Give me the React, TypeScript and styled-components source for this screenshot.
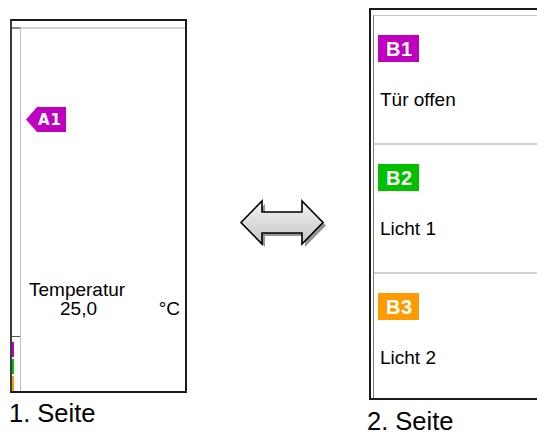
import React from "react";
import styled, { createGlobalStyle } from "styled-components";

const Global = createGlobalStyle`
  html, body { margin: 0; padding: 0; background: #fff; }
  body {
    width: 537px;
    height: 434px;
    overflow: hidden;
    font-family: "Liberation Sans", Arial, sans-serif;
    color: #000;
  }
`;

const Page = styled.div`
  display: flex;
  align-items: flex-start;
  width: 537px;
  height: 434px;
  overflow: hidden;
`;

const Column = styled.div<{ $left: number; $top: number; $width: number }>`
  display: flex;
  flex-direction: column;
  flex: none;
  margin-left: ${(p) => p.$left}px;
  margin-top: ${(p) => p.$top}px;
  width: ${(p) => p.$width}px;
`;

const Caption = styled.div<{ $top: number; $left: number }>`
  margin-top: ${(p) => p.$top}px;
  margin-left: ${(p) => p.$left}px;
  font-size: 25.5px;
  line-height: 1.15;
  white-space: nowrap;
`;

/* ---------- page 1 ---------- */
const ScreenOne = styled.div`
  box-sizing: border-box;
  width: 177px;
  height: 374px;
  border: 2px solid #1a1a1a;
  border-left-color: #3a3a3a;
  display: flex;
  flex-direction: column;
`;

const TopBand = styled.div<{ $h: number }>`
  height: ${(p) => p.$h}px;
  flex: none;
`;

const ScreenBody = styled.div`
  flex: 1;
  display: flex;
`;

const SideStrip = styled.div`
  width: 8px;
  flex: none;
  border-top: 2px solid #8a8a8a;
  border-right: 1px solid #bdbdbd;
  display: flex;
  flex-direction: column;
  justify-content: flex-end;
`;

const SideDivider = styled.div`
  height: 1px;
  background: #555;
  margin-bottom: 5px;
`;

const SideBar = styled.div<{ $color: string }>`
  width: 2px;
  height: 15px;
  background: ${(p) => p.$color};
  & + & {
    margin-top: 2px;
  }
`;

const MainArea = styled.div`
  flex: 1;
  border-top: 2px solid #d4d4d4;
  display: flex;
  flex-direction: column;
`;

const ArrowTag = styled.div<{ $color: string }>`
  margin-top: 78px;
  margin-left: 5px;
  width: 40px;
  height: 25px;
  background: ${(p) => p.$color};
  clip-path: polygon(0 50%, 11px 0, 100% 0, 100% 100%, 11px 100%);
  color: #fff;
  font-family: "DejaVu Sans", sans-serif;
  font-weight: bold;
  font-size: 15px;
  letter-spacing: 1px;
  display: flex;
  align-items: center;
  padding-left: 12px;
  box-sizing: border-box;
`;

const TempBlock = styled.div`
  margin-top: 148px;
  font-size: 19px;
  line-height: 19px;
`;

const TempLabel = styled.div`
  padding-left: 8px;
`;

const TempRow = styled.div`
  display: flex;
  justify-content: space-between;
  padding: 0 5px 0 39px;
`;

/* ---------- arrow ---------- */
const ArrowWrap = styled.svg`
  flex: none;
  margin-left: 51px;
  margin-top: 198px;
`;

/* ---------- page 2 ---------- */
const ScreenTwo = styled.div`
  box-sizing: border-box;
  width: 200px;
  height: 392px;
  border: 2px solid #1a1a1a;
  border-right: none;
  padding-left: 2px;
  display: flex;
  flex-direction: column;
`;

const SectionList = styled.div`
  flex: 1;
  border-top: 1px solid #c8c8c8;
  border-left: 1px solid #7a7a7a;
  display: flex;
  flex-direction: column;
`;

const Section = styled.div<{ $last?: boolean }>`
  display: flex;
  flex-direction: column;
  align-items: flex-start;
  ${(p) =>
    p.$last
      ? "flex: 1;"
      : "height: 127px; flex: none; border-bottom: 2px solid #d2d2d2;"}
`;

const BoxTag = styled.div<{ $color: string }>`
  margin-top: 19px;
  margin-left: 4px;
  width: 41px;
  height: 27px;
  background: ${(p) => p.$color};
  color: #fff;
  font-weight: bold;
  font-size: 20px;
  line-height: 1;
  letter-spacing: 0.5px;
  display: flex;
  align-items: center;
  padding-left: 8px;
  box-sizing: border-box;
`;

const SectionText = styled.div`
  margin-top: 27px;
  margin-left: 6px;
  font-size: 19px;
  line-height: 1.15;
  white-space: nowrap;
`;

const PURPLE = "#c000c0";
const GREEN = "#00c000";
const ORANGE = "#ff9a00";

const sections = [
  { id: "B1", color: PURPLE, text: "Tür offen" },
  { id: "B2", color: GREEN, text: "Licht 1" },
  { id: "B3", color: ORANGE, text: "Licht 2" },
];

const DoubleArrow = () => (
  <ArrowWrap width="92" height="54" viewBox="0 0 92 54">
    <defs>
      <linearGradient id="arrowFill" x1="0" y1="0" x2="0" y2="1">
        <stop offset="0" stopColor="#f4f4f4" />
        <stop offset="1" stopColor="#c4c4c4" />
      </linearGradient>
    </defs>
    <path
      d="M3 24.5 L24 3 L24 14 L64 14 L64 3 L85 24.5 L64 46 L64 35 L24 35 L24 46 Z"
      transform="translate(3 3)"
      fill="#7a7a7a"
      opacity="0.8"
    />
    <path
      d="M3 24.5 L24 3 L24 14 L64 14 L64 3 L85 24.5 L64 46 L64 35 L24 35 L24 46 Z"
      fill="url(#arrowFill)"
      stroke="#000"
      strokeWidth="1.6"
      strokeLinejoin="miter"
    />
  </ArrowWrap>
);

export default function App() {
  return (
    <>
      <Global />
      <Page>
        <Column $left={10} $top={19} $width={177}>
          <ScreenOne>
            <TopBand $h={6} />
            <ScreenBody>
              <SideStrip>
                <SideDivider />
                <SideBar $color={PURPLE} />
                <SideBar $color={GREEN} />
                <SideBar $color={ORANGE} />
              </SideStrip>
              <MainArea>
                <ArrowTag $color={PURPLE}>A1</ArrowTag>
                <TempBlock>
                  <TempLabel>Temperatur</TempLabel>
                  <TempRow>
                    <span>25,0</span>
                    <span>°C</span>
                  </TempRow>
                </TempBlock>
              </MainArea>
            </ScreenBody>
          </ScreenOne>
          <Caption $top={6} $left={-1}>1. Seite</Caption>
        </Column>

        <DoubleArrow />

        <Column $left={39} $top={8} $width={200}>
          <ScreenTwo>
            <TopBand $h={5} />
            <SectionList>
              {sections.map((s, i) => (
                <Section key={s.id} $last={i === sections.length - 1}>
                  <BoxTag $color={s.color}>{s.id}</BoxTag>
                  <SectionText>{s.text}</SectionText>
                </Section>
              ))}
            </SectionList>
          </ScreenTwo>
          <Caption $top={7} $left={-2}>2. Seite</Caption>
        </Column>
      </Page>
    </>
  );
}
